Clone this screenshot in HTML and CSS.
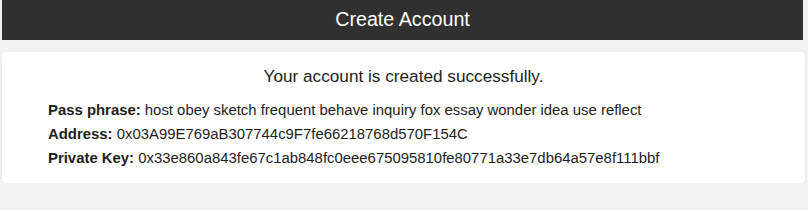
FILE: index.html
```html
<!DOCTYPE html>
<html lang="en">
  <head>
    <meta charset="UTF-8" />
    <meta name="viewport" content="width=device-width, initial-scale=1.0" />
    <title>Create Account</title>
    <link rel="stylesheet" href="styles.css">
  </head>
  <body>
    <div class="topbar">Create Account</div>
    <div class="panel">
      <p class="success">Your account is created successfully.</p>
      <div class="details">
        <div class="row"><b>Pass phrase:</b> host obey sketch frequent behave inquiry fox essay wonder idea use reflect</div>
        <div class="row"><b>Address:</b> 0x03A99E769aB307744c9F7fe66218768d570F154C</div>
        <div class="row"><b>Private Key:</b> 0x33e860a843fe67c1ab848fc0eee675095810fe80771a33e7db64a57e8f111bbf</div>
      </div>
    </div>
  </body>
</html>
```

FILE: styles.css
```css
body {
  margin: 0;
  background-color: #f2f2f2;
  font-family: "Liberation Sans", Arial, sans-serif;
  color: #1e1e1e;
}

.topbar {
  margin: 0 5px 0 2px;
  height: 40px;
  line-height: 38px;
  background-color: #303030;
  color: #fff;
  text-align: center;
  font-size: 19.7px;
}

.panel {
  margin: 12px 3px 0 2px;
  padding: 14px 0 13px 46px;
  background-color: #fff;
  border-radius: 4px;
  box-shadow: 0 1px 3px rgba(0, 0, 0, 0.08);
}

.success {
  margin: 0 0 12px -46px;
  text-align: center;
  font-size: 17.2px;
  line-height: 20px;
}

.details {
  font-size: 14.9px;
  line-height: 24px;
}

.row b {
  font-weight: bold;
}
```
